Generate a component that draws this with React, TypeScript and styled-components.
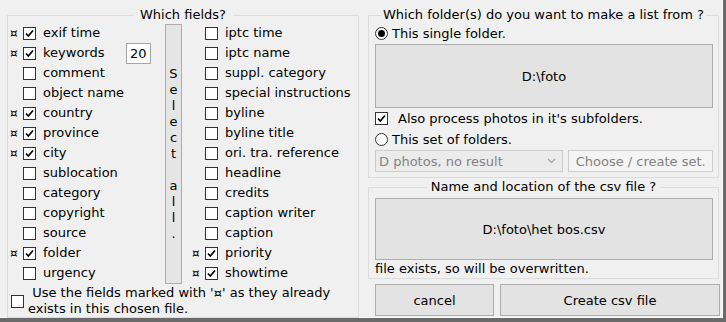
import React from 'react';
import styled, { createGlobalStyle } from 'styled-components';

const GlobalStyle = createGlobalStyle`
    html, body {
        margin: 0;
        padding: 0;
        background: #f0f0f0;
    }
    body {
        font-family: "DejaVu Sans", Verdana, sans-serif;
        font-size: 13px;
        color: #000;
    }
`;

interface IField {
    label: string,
    marked?: boolean,
    checked?: boolean,
    count?: string,
}

const leftFields: IField[] = [
    { label: 'exif time', marked: true, checked: true },
    { label: 'keywords', marked: true, checked: true, count: '20' },
    { label: 'comment' },
    { label: 'object name' },
    { label: 'country', marked: true, checked: true },
    { label: 'province', marked: true, checked: true },
    { label: 'city', marked: true, checked: true },
    { label: 'sublocation' },
    { label: 'category' },
    { label: 'copyright' },
    { label: 'source' },
    { label: 'folder', marked: true, checked: true },
    { label: 'urgency' },
];

const rightFields: IField[] = [
    { label: 'iptc time' },
    { label: 'iptc name' },
    { label: 'suppl. category' },
    { label: 'special instructions' },
    { label: 'byline' },
    { label: 'byline title' },
    { label: 'ori. tra. reference' },
    { label: 'headline' },
    { label: 'credits' },
    { label: 'caption writer' },
    { label: 'caption' },
    { label: 'priority', marked: true, checked: true },
    { label: 'showtime', marked: true, checked: true },
];

const CheckBox = ({ checked }: { checked?: boolean }) => (
    <Box>
        {checked && (
            <svg width='11' height='11' viewBox='0 0 11 11'>
                <path d='M2 5.5 L4.3 8 L9 2.5' fill='none' stroke='#000' strokeWidth='1.7' />
            </svg>
        )}
    </Box>
);

const Radio = ({ checked }: { checked?: boolean }) => (
    <RadioCircle>{checked && <RadioDot />}</RadioCircle>
);

const FieldColumn = ({ fields, width }: { fields: IField[], width: number }) => (
    <Column $width={width}>
        {fields.map((f) => (
            <FieldRow key={f.label}>
                <Marker>{f.marked ? '¤' : ''}</Marker>
                <CheckBox checked={f.checked} />
                <FieldLabel>{f.label}</FieldLabel>
                {f.count && <CountInput>{f.count}</CountInput>}
            </FieldRow>
        ))}
    </Column>
);

export default function App() {
    return (
        <Window>
            <GlobalStyle />
            <Group $width={352}>
                <Legend $pad={7}>Which fields?</Legend>
                <FieldsArea>
                    <FieldColumn fields={leftFields} width={155} />
                    <SelectAll>
                        {'Select all.'.split('').map((ch, i) => (
                            <span key={i}>{ch === ' ' ? '\u00a0' : ch}</span>
                        ))}
                    </SelectAll>
                    <FieldColumn fields={rightFields} width={160} />
                </FieldsArea>
                <UseMarked>
                    <CheckBox />
                    <UseLabel>
                        {" Use the fields marked with '¤' as they already"}
                        <br />
                        exists in this chosen file.
                    </UseLabel>
                </UseMarked>
            </Group>

            <RightColumn>
                <Group $width={351}>
                    <Legend $pad={2}>Which folder(s) do you want to make a list from ?</Legend>
                    <GroupBody $bottom={5}>
                        <OptionRow $height={20}>
                            <Radio checked />
                            <span>This single folder.</span>
                        </OptionRow>
                        <BigButton $height={64} $top={1}>D:\foto</BigButton>
                        <OptionRow $height={21} $gap={10}>
                            <CheckBox checked />
                            <span>Also process photos in it's subfolders.</span>
                        </OptionRow>
                        <OptionRow $height={21}>
                            <Radio />
                            <span>This set of folders.</span>
                        </OptionRow>
                        <SetRow>
                            <Combo>
                                <span>D photos, no result</span>
                                <svg width='9' height='6' viewBox='0 0 9 6'>
                                    <path d='M1 1 L4.5 4.5 L8 1' fill='none' stroke='#a0a0a0' strokeWidth='1.2' />
                                </svg>
                            </Combo>
                            <DisabledButton>Choose / create set.</DisabledButton>
                        </SetRow>
                    </GroupBody>
                </Group>

                <Group $width={351} $top={1}>
                    <Legend $pad={4}>Name and location of the csv file ?</Legend>
                    <GroupBody $top={3} $bottom={1}>
                        <BigButton $height={62}>D:\foto\het bos.csv</BigButton>
                        <StatusText>file exists, so will be overwritten.</StatusText>
                    </GroupBody>
                </Group>

                <ButtonRow>
                    <ActionButton $width={119}>cancel</ActionButton>
                    <ActionButton $width={220}>Create csv file</ActionButton>
                </ButtonRow>
            </RightColumn>
        </Window>
    );
}

const Window = styled.div`
    width: 726px;
    height: 322px;
    box-sizing: border-box;
    display: flex;
    align-items: flex-start;
    gap: 9px;
    padding: 7px 0 0 7px;
    background: #f0f0f0;
    border-right: 3px solid #6a6a6a;
    border-bottom: 4px solid #6a6a6a;
    box-shadow: inset -1px -1px 0 #fbfbfb;
    overflow: hidden;
`;

const Group = styled.fieldset<{ $width: number, $top?: number }>`
    width: ${p => p.$width}px;
    box-sizing: border-box;
    margin: ${p => p.$top || 0}px 0 0 0;
    padding: 0;
    border: 1px solid #dcdcdc;
    min-width: 0;
`;

const Legend = styled.legend<{ $pad: number }>`
    margin: 0 auto;
    padding: 0 ${p => p.$pad}px;
    line-height: 16px;
    height: 16px;
    white-space: nowrap;
`;

const FieldsArea = styled.div`
    display: flex;
    align-items: flex-start;
    padding-left: 2px;
`;

const Column = styled.div<{ $width: number }>`
    width: ${p => p.$width}px;
    display: flex;
    flex-direction: column;
    &:last-child {
        margin-left: 10px;
    }
    &:first-child {
        padding-right: 14px;
        box-sizing: border-box;
    }
`;

const FieldRow = styled.div`
    height: 20px;
    display: flex;
    align-items: center;
    white-space: nowrap;
`;

const Marker = styled.span`
    width: 13px;
    font-size: 12px;
    line-height: 20px;
`;

const Box = styled.span`
    width: 13px;
    height: 13px;
    box-sizing: border-box;
    border: 1px solid #333;
    background: #fff;
    display: inline-flex;
    align-items: center;
    justify-content: center;
    flex-shrink: 0;
`;

const FieldLabel = styled.span`
    margin-left: 7px;
    line-height: 20px;
`;

const CountInput = styled.span`
    margin-left: auto;
    width: 25px;
    height: 21px;
    box-sizing: border-box;
    border: 1px solid #a5a5a5;
    background: #fff;
    padding-left: 3px;
    line-height: 19px;
`;

const SelectAll = styled.div`
    width: 17px;
    height: 260px;
    margin-top: 1px;
    box-sizing: border-box;
    border: 1px solid #adadad;
    background: #e5e5e5;
    display: flex;
    flex-direction: column;
    align-items: center;
    justify-content: center;
    line-height: 16px;
    flex-shrink: 0;
`;

const UseMarked = styled.div`
    display: flex;
    align-items: center;
    gap: 4px;
    padding: 1px 0 0 3px;
    height: 33px;
    box-sizing: border-box;
`;

const UseLabel = styled.span`
    line-height: 16px;
    white-space: pre;
`;

const RightColumn = styled.div`
    width: 352px;
    display: flex;
    flex-direction: column;
`;

const GroupBody = styled.div<{ $top?: number, $bottom?: number }>`
    display: flex;
    flex-direction: column;
    padding: ${p => p.$top || 0}px 5px ${p => p.$bottom || 0}px 6px;
`;

const OptionRow = styled.div<{ $height: number, $gap?: number }>`
    height: ${p => p.$height}px;
    display: flex;
    align-items: center;
    gap: ${p => p.$gap || 4}px;
    white-space: nowrap;
`;

const RadioCircle = styled.span`
    width: 13px;
    height: 13px;
    box-sizing: border-box;
    border: 1px solid #333;
    border-radius: 50%;
    background: #fff;
    display: inline-flex;
    align-items: center;
    justify-content: center;
`;

const RadioDot = styled.span`
    width: 7px;
    height: 7px;
    border-radius: 50%;
    background: #000;
`;

const BigButton = styled.div<{ $height: number, $top?: number }>`
    height: ${p => p.$height}px;
    margin-top: ${p => p.$top || 0}px;
    box-sizing: border-box;
    border: 1px solid #adadad;
    background: #e3e3e3;
    display: flex;
    align-items: center;
    justify-content: center;
`;

const SetRow = styled.div`
    height: 22px;
    display: flex;
    gap: 5px;
    color: #838383;
`;

const Combo = styled.div`
    width: 189px;
    box-sizing: border-box;
    border: 1px solid #cccccc;
    background: #ebebeb;
    display: flex;
    align-items: center;
    justify-content: space-between;
    padding: 0 6px 0 3px;
`;

const DisabledButton = styled.div`
    width: 145px;
    box-sizing: border-box;
    border: 1px solid #cccccc;
    background: #f4f4f4;
    display: flex;
    align-items: center;
    justify-content: center;
    white-space: nowrap;
`;

const StatusText = styled.div`
    height: 17px;
    line-height: 17px;
`;

const ButtonRow = styled.div`
    display: flex;
    gap: 6px;
    margin: 5px 0 0 7px;
`;

const ActionButton = styled.div<{ $width: number }>`
    width: ${p => p.$width}px;
    height: 32px;
    box-sizing: border-box;
    border: 1px solid #adadad;
    background: #e3e3e3;
    display: flex;
    align-items: center;
    justify-content: center;
`;
